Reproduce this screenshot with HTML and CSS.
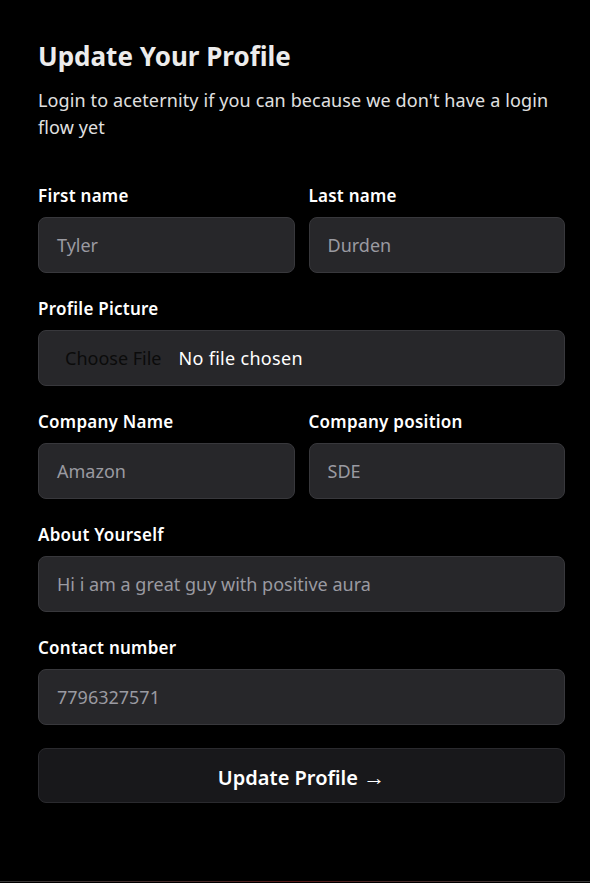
FILE: index.html
```html
<!DOCTYPE html>
<html lang="en">
<head>
<meta charset="utf-8">
<title>Update Your Profile</title>
<link rel="stylesheet" href="styles.css">
</head>
<body>
<main class="page">
  <h1 class="title">Update Your Profile</h1>
  <p class="subtitle">Login to aceternity if you can because we don't have a login flow yet</p>
  <form class="form">
    <div class="row two">
      <div class="field">
        <label class="label">First name</label>
        <div class="input"><span class="ph">Tyler</span></div>
      </div>
      <div class="field">
        <label class="label">Last name</label>
        <div class="input"><span class="ph">Durden</span></div>
      </div>
    </div>
    <div class="field">
      <label class="label">Profile Picture</label>
      <div class="input file"><span class="choose">Choose File</span><span class="nofile">No file chosen</span></div>
    </div>
    <div class="row two">
      <div class="field">
        <label class="label">Company Name</label>
        <div class="input"><span class="ph">Amazon</span></div>
      </div>
      <div class="field">
        <label class="label">Company position</label>
        <div class="input"><span class="ph">SDE</span></div>
      </div>
    </div>
    <div class="field">
      <label class="label">About Yourself</label>
      <div class="input"><span class="ph">Hi i am a great guy with positive aura</span></div>
    </div>
    <div class="field">
      <label class="label">Contact number</label>
      <div class="input"><span class="ph">7796327571</span></div>
    </div>
    <button type="button" class="submit">Update Profile <span class="arrow">&rarr;</span></button>
  </form>
</main>
<div class="bottom-line"></div>
</body>
</html>
```
FILE: styles.css
```css
html, body {
  margin: 0;
  padding: 0;
  background: #000;
  height: 100%;
}
body {
  font-family: "Noto Sans", "Open Sans", sans-serif;
  color: #fff;
  position: relative;
  min-height: 883px;
}
.page {
  padding: 39px 25px 0 38px;
  width: 527px;
}
.title {
  margin: 0;
  font-size: 26px;
  line-height: 34px;
  font-weight: 700;
  color: #ececec;
}
.subtitle {
  margin: 14px 0 0;
  font-size: 18px;
  line-height: 27px;
  letter-spacing: 0.12px;
  color: #e0e0e0;
  font-weight: 400;
}
.form {
  margin-top: 43px;
  display: flex;
  flex-direction: column;
  gap: 24px;
}
.row.two {
  display: grid;
  grid-template-columns: 1fr 1fr;
  gap: 14px;
}
.field {
  display: flex;
  flex-direction: column;
  gap: 9px;
}
.label {
  font-size: 17px;
  line-height: 24px;
  letter-spacing: 0.25px;
  font-weight: 600;
  color: #fff;
}
.input {
  height: 56px;
  box-sizing: border-box;
  background: #27272a;
  border: 1px solid #38383c;
  border-radius: 8px;
  display: flex;
  align-items: center;
  padding: 0 18px;
  font-size: 18px;
}
.ph {
  color: #9a9aa1;
}
.file {
  padding-left: 26px;
}
.choose {
  color: #0b0b0b;
  margin-right: 17px;
}
.nofile {
  color: #fff;
  letter-spacing: 0.3px;
}
.submit {
  margin-top: -1px;
  height: 55px;
  background: #18181b;
  border: 1px solid #2a2a2e;
  border-radius: 8px;
  color: #fff;
  font-family: inherit;
  font-size: 20px;
  font-weight: 600;
}
.arrow {
  font-size: 22px;
  font-weight: 400;
}
.bottom-line {
  position: absolute;
  left: 0;
  right: 0;
  bottom: 1px;
  height: 1px;
  background: linear-gradient(90deg, #3a3a3a 0%, #4a2a2a 35%, #5a1a1a 50%, #4a2a2a 65%, #3a3a3a 100%);
}
```
